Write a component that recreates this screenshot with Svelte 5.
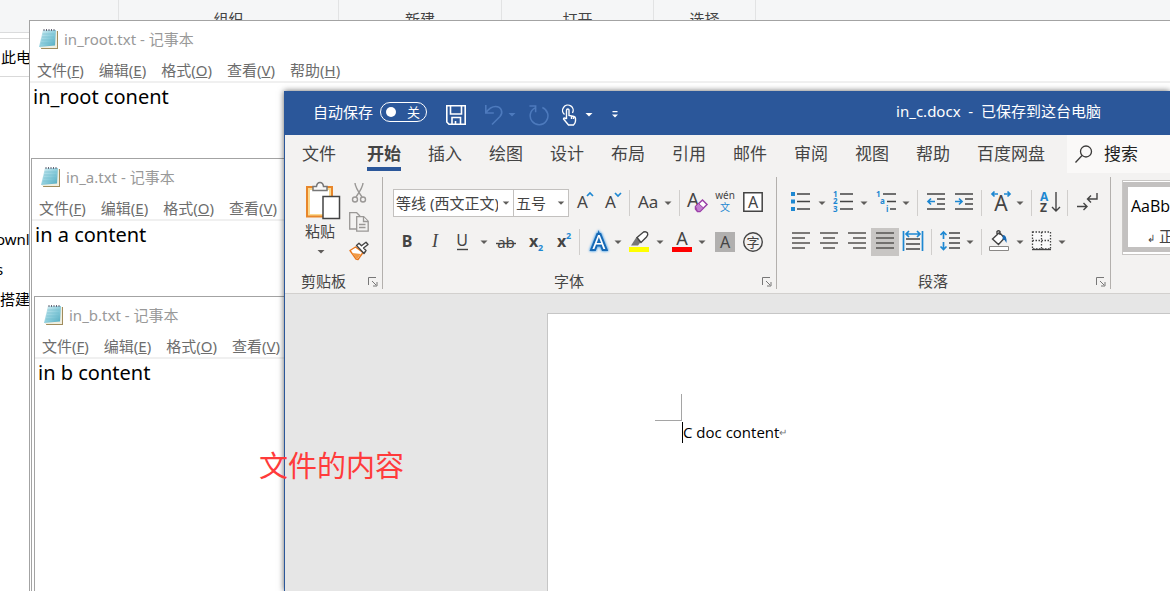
<script>
  const groups = [
    { name: '', width: 118 },
    { name: '组织', width: 219 },
    { name: '新建', width: 162 },
    { name: '打开', width: 151 },
    { name: '选择', width: 101 }
  ];
  const menus = [
    ['文件', 'F'],
    ['编辑', 'E'],
    ['格式', 'O'],
    ['查看', 'V'],
    ['帮助', 'H']
  ];
  const notepads = [
    { id: 'root', title: 'in_root.txt - 记事本', text: 'in_root conent' },
    { id: 'a', title: 'in_a.txt - 记事本', text: 'in a content' },
    { id: 'b', title: 'in_b.txt - 记事本', text: 'in b content' }
  ];
  const tabs = ['文件', '开始', '插入', '绘图', '设计', '布局', '引用', '邮件', '审阅', '视图', '帮助', '百度网盘'];
</script>

{#snippet arrow()}
  <svg class="arrow" viewBox="0 0 14 28" aria-hidden="true"><path d="M3.500 12.500h7l-3.500 3.500z" fill="#5f5d5b" /></svg>
{/snippet}

{#snippet launcher(label)}
  <button class="launcher" aria-label={label}>
    <svg width="10" height="10" viewBox="0 0 10 10" fill="none" stroke="#777">
      <path d="M.5 8V.5H8M4 4l4 4M9 5v4H5" />
    </svg>
  </button>
{/snippet}

{#snippet lines(rows)}
  <svg viewBox="0 0 28 28" stroke="#5d5b59" stroke-width="1.6">
    {#each rows as [x1, x2], i}
      <path d="M{x1} {5 + i * 5}H{x2}" />
    {/each}
  </svg>
{/snippet}

<div class="desktop">
  <section class="explorer" aria-label="文件资源管理器">
    <div class="groups">
      {#each groups as g}
        <div class="exgroup" style="width: {g.width}px">{g.name}</div>
      {/each}
    </div>
    <div class="address">此电脑</div>
    <ul class="tree">
      <li class="tail">ownload</li>
      <li class="tail">s</li>
      <li>搭建</li>
    </ul>
  </section>

  {#each notepads as n}
    <section class="notepad {n.id}">
      <header>
        <svg width="20" height="22" viewBox="0 0 20 22" aria-hidden="true">
          <defs>
            <linearGradient id="np-{n.id}" x1="0" y1="0" x2="1" y2="1">
              <stop offset="0" stop-color="#d8f0f5" />
              <stop offset=".55" stop-color="#8accdb" />
              <stop offset="1" stop-color="#4fa9bf" />
            </linearGradient>
          </defs>
          <path d="M5 3h14v18H2z" fill="#a08c5c" />
          <path d="M4 3h14v17H1z" fill="#f1efe0" />
          <path d="M4 2h13l-1 15.500L0 19z" fill="url(#np-{n.id})" />
          <path d="M3.500 6h12M3 9h12M2.500 12h12M2 15h12" stroke="#6fbccd" stroke-width=".6" />
          <path d="M5 3V1M7.500 3V1M10 3V1M12.500 3V1M15 3V1" stroke="#667" />
        </svg>
        <span>{n.title}</span>
      </header>
      <nav>
        {#each menus as [label, key]}
          <button>{label}(<u>{key}</u>)</button>
        {/each}
      </nav>
      <textarea aria-label={n.title} spellcheck="false" value={n.text}></textarea>
    </section>
  {/each}

  <section class="word">
    <header class="titlebar">
      <label class="autosave">
        自动保存
        <span class="pill"><input type="checkbox" /><i></i><b>关</b></span>
      </label>
      <div class="quick">
        <button class="save" aria-label="保存">
          <svg width="20" height="20" viewBox="0 0 20 20" fill="none" stroke="#fff" stroke-width="1.600">
            <path d="M.8.800h18.400v18.400H3L.8 17zM4.500 1v8h11V1M6 19v-6.500h8.500V19M9.500 19v-3" />
          </svg>
        </button>
        <button class="split" aria-label="撤消">
          <svg width="20" height="22" viewBox="0 0 20 22" fill="none" stroke="#4d7abd" stroke-width="1.600">
            <path d="M1.800 1v8h8M2 8.500C5 4.500 8 2.500 11.500 2.500c6 0 8 6 4.500 10L8 20.500" />
          </svg>
          <svg width="8" height="4" viewBox="0 0 8 4"><path d="M.5 0h7L4 3.500z" fill="#4d7abd" /></svg>
        </button>
        <button aria-label="重复">
          <svg width="21" height="22" viewBox="0 0 22 22" fill="none" stroke="#4d7abd" stroke-width="1.600">
            <path d="M1.500 1.500H8V8M7.500 3.500A9.300 9.300 0 1 0 15 3.200" />
          </svg>
        </button>
        <button class="split" aria-label="触摸/鼠标模式">
          <svg width="20" height="22" viewBox="0 0 20 22" fill="none" stroke="#fff" stroke-width="1.400">
            <path d="M3.500 10.500A5.300 5.300 0 1 1 11.500 9M5.500 15V6.500q0-1.500 1.300-1.500T8 6.500v5l5 1q1.500.500 1.500 2V17q0 2-2 4H7.500L2.500 15q0-2 3 0M10.500 12v3M12.500 12.500V15" />
          </svg>
          <svg width="8" height="4" viewBox="0 0 8 4"><path d="M.5 0h7L4 3.500z" fill="#fff" /></svg>
        </button>
        <button class="customize" aria-label="自定义快速访问工具栏">
          <svg width="8" height="8" viewBox="0 0 8 8" fill="#fff"><path d="M1.500 0h5v1.200h-5zM1 3.500h6L4 6.500z" /></svg>
        </button>
      </div>
      <h1>in_c.docx&nbsp; -&nbsp; 已保存到这台电脑</h1>
    </header>

    <nav class="tabs">
      {#each tabs as t}
        <button class:active={t === '开始'}>{t}</button>
      {/each}
      <button class="search">
        <svg width="18" height="18" viewBox="0 0 18 18" fill="none" stroke="#3b3a39" stroke-width="1.300">
          <circle cx="11" cy="6.500" r="5.500" /><path d="M7 10.500L.5 17.500" />
        </svg>
        搜索
      </button>
    </nav>

    <div class="ribbon">
      <div class="group clipboard">
        <div class="body">
          <button class="paste">
            <svg width="36" height="40" viewBox="0 0 36 40" fill="none">
              <path d="M2 6h25v29.500H2z" fill="#fbd98f" stroke="#e8862a" stroke-width="2" />
              <path d="M5 9h19v24H5z" fill="#fff" />
              <path d="M8 9.500V5.500h3.500q.5-4 3.500-4t3.500 4H22v4z" fill="#f8f8f8" stroke="#777" stroke-width="1.500" />
              <path d="M18 15.500h16.500v22H18z" fill="#fff" stroke="#444" stroke-width="1.500" />
            </svg>
            <span>粘贴</span>
            <svg class="more" width="8" height="4" viewBox="0 0 8 4"><path d="M.5 0h7L4 3.500z" fill="#5f5d5b" /></svg>
          </button>
          <div class="minis">
            <button aria-label="剪切">
              <svg width="20" height="20" viewBox="0 0 20 20" fill="none" stroke="#9a9896" stroke-width="1.400">
                <path d="M6 0q0 4 7 14M14 0q0 4-7 14" />
                <circle cx="6" cy="16.500" r="2.500" /><circle cx="14" cy="16.500" r="2.500" />
              </svg>
            </button>
            <button aria-label="复制">
              <svg width="20" height="20" viewBox="0 0 20 20" fill="#f3f2f1" stroke="#9a9896" stroke-width="1.300">
                <path d="M.7.700h7l3 3V17H.7z" />
                <path d="M7.700 4.700h7l4.500 4.500v10H7.700z" /><path d="M14.500 5v4.500H19M10 12.500h6.500M10 15.500h6.500" />
              </svg>
            </button>
            <button aria-label="格式刷">
              <svg width="20" height="20" viewBox="0 0 20 20" fill="none" stroke-linejoin="round">
                <path d="M6.500 6L1 9.500l6 8.500 2 .500 5-7z" fill="#fff" stroke="#e8761c" stroke-width="1.400" />
                <path d="M3 12l9 1-4 5z" fill="#f29a45" />
                <path d="M7.500 4.500l7.500 8 2-3-2.500-2.500L19 3.500 17 1.200l-4.500 3.500-2.500-2.500z" fill="#fff" stroke="#444" stroke-width="1.400" />
              </svg>
            </button>
          </div>
        </div>
        <footer><span>剪贴板</span>{@render launcher('剪贴板选项')}</footer>
      </div>

      <div class="group font">
        <div class="row">
          <div class="combo name">
            <select aria-label="字体"><option>等线 (西文正文)</option></select>{@render arrow()}
          </div>
          <div class="combo size">
            <select aria-label="字号"><option>五号</option></select>{@render arrow()}
          </div>
          <button aria-label="增大字号">
            <svg viewBox="0 0 28 28"><text x="8" y="19" font-size="17">A</text><path d="M18 7l3-3 3 3" class="blue" /></svg>
          </button>
          <button aria-label="减小字号">
            <svg viewBox="0 0 28 28"><text x="8" y="19" font-size="17">A</text><path d="M18 4l3 3 3-3" class="blue" /></svg>
          </button>
          <hr />
          <button aria-label="更改大小写">
            <svg viewBox="0 0 28 28"><text x="5" y="19" font-size="17">Aa</text></svg>{@render arrow()}
          </button>
          <hr />
          <button aria-label="清除所有格式">
            <svg viewBox="0 0 28 28">
              <text x="4" y="18" font-size="19">A</text>
              <path d="M12.500 17.500l7-6.500 4.500 4.500-7 7h-2.500l-2-2.500z" fill="#fff" stroke="#9b3fa8" stroke-width="1.500" />
              <path d="M12.500 17.500l3-3 5 4.500-3.500 3.500h-2.500z" fill="#c27fd0" stroke="#9b3fa8" />
            </svg>
          </button>
          <button aria-label="拼音指南">
            <svg viewBox="0 0 28 28"><text x="14" y="10" font-size="10" text-anchor="middle">wén</text><text x="14" y="22" font-size="10" text-anchor="middle" class="bluetext">文</text></svg>
          </button>
          <button aria-label="字符边框">
            <svg viewBox="0 0 28 28"><path d="M4.800 3.800h18.400v18.400H4.800z" fill="#fff" stroke="#444" stroke-width="1.500" /><text x="14" y="19" font-size="16" text-anchor="middle">A</text></svg>
          </button>
        </div>
        <div class="row">
          <button aria-label="加粗"><svg viewBox="0 0 28 28"><text x="14" y="19" font-size="16" font-weight="700" text-anchor="middle">B</text></svg></button>
          <button aria-label="倾斜"><svg viewBox="0 0 28 28"><text x="14" y="19" font-size="18" class="serif" text-anchor="middle">I</text></svg></button>
          <button aria-label="下划线">
            <svg viewBox="0 0 28 28"><text x="13" y="18" font-size="16" text-anchor="middle">U</text><path d="M8 21.500h11" class="ink" /></svg>{@render arrow()}
          </button>
          <button aria-label="删除线"><svg viewBox="0 0 28 28"><text x="15" y="20" font-size="15" text-anchor="middle">ab</text><path d="M5 15.500h20" class="ink" /></svg></button>
          <button aria-label="下标"><svg viewBox="0 0 28 28"><text x="10" y="19" font-size="16" font-weight="700">x</text><text x="19" y="23" font-size="9" font-weight="700" class="bluetext">2</text></svg></button>
          <button aria-label="上标"><svg viewBox="0 0 28 28"><text x="10" y="19" font-size="16" font-weight="700">x</text><text x="19" y="11" font-size="9" font-weight="700" class="bluetext">2</text></svg></button>
          <hr />
          <button aria-label="文本效果和版式">
            <svg class="effect" viewBox="0 0 28 28"><text x="16" y="21" font-size="20" text-anchor="middle">A</text></svg>{@render arrow()}
          </button>
          <button aria-label="文本突出显示颜色">
            <svg viewBox="0 0 28 28">
              <path d="M4 19h20v5H4z" fill="#ff0" />
              <path d="M6 17.500L11.500 9l4.500 4.500-3 4z" fill="#777" />
              <path d="M12 9.500L18.500 4Q21 3 22.500 5q1 2-1 4L16 14.500z" fill="#fff" stroke="#444" stroke-width="1.400" />
            </svg>{@render arrow()}
          </button>
          <button aria-label="字体颜色">
            <svg viewBox="0 0 28 28"><text x="15" y="17" font-size="18" text-anchor="middle">A</text><path d="M5 19h20v5H5z" fill="red" /></svg>{@render arrow()}
          </button>
          <button aria-label="字符底纹"><svg viewBox="0 0 28 28"><path d="M6 4h20v20H6z" fill="#b1b0af" /><text x="16" y="20" font-size="16" text-anchor="middle">A</text></svg></button>
          <button aria-label="带圈字符"><svg viewBox="0 0 28 28"><circle cx="16" cy="14" r="9.300" fill="none" class="ink" /><text x="16" y="19" font-size="13" text-anchor="middle">字</text></svg></button>
        </div>
        <footer><span>字体</span>{@render launcher('字体选项')}</footer>
      </div>

      <div class="group para">
        <div class="row">
          <button aria-label="项目符号">
            <svg viewBox="0 0 28 28"><path d="M4 3h4v4H4zM4 10.500h4v4H4zM4 18h4v4H4z" fill="#1e88d2" /><path d="M10 5h13M10 12.500h13M10 20h13" class="ink" /></svg>{@render arrow()}
          </button>
          <button aria-label="编号">
            <svg viewBox="0 0 28 28">
              <g font-size="8" font-weight="700" class="bluetext"><text x="4" y="8">1</text><text x="4" y="15">2</text><text x="4" y="23">3</text></g>
              <path d="M11 5h13M11 12.500h13M11 20h13" class="ink" />
            </svg>{@render arrow()}
          </button>
          <button aria-label="多级列表">
            <svg viewBox="0 0 28 28">
              <g font-size="8" font-weight="700" class="bluetext"><text x="5" y="8">1</text><text x="9" y="15">a</text><text x="15" y="23">i</text></g>
              <path d="M12 5h13M16 12.500h9M19 20h6" class="ink" />
            </svg>{@render arrow()}
          </button>
          <hr />
          <button aria-label="减少缩进量">
            <svg viewBox="0 0 28 28"><path d="M6 5h18M16 10h8M16 15h8M6 20h18" class="ink" /><path d="M14 12.500H7M10 9.500l-3 3 3 3" class="blue" /></svg>
          </button>
          <button aria-label="增加缩进量">
            <svg viewBox="0 0 28 28"><path d="M6 5h18M16 10h8M16 15h8M6 20h18" class="ink" /><path d="M6 12.500h7M10 9.500l3 3-3 3" class="blue" /></svg>
          </button>
          <hr />
          <button aria-label="中文版式">
            <svg viewBox="0 0 28 28"><text x="16" y="22" font-size="21" text-anchor="middle">A</text><path d="M7 5h6M9.500 2.500L7 5l2.500 2.500M19 5h6M22.500 2.500L25 5 22.500 7.500" class="blue" /></svg>{@render arrow()}
          </button>
          <hr />
          <button aria-label="排序">
            <svg viewBox="0 0 28 28"><text x="5" y="12" font-size="12" font-weight="700" class="bluetext">A</text><text x="5" y="23" font-size="12" font-weight="700">Z</text><path d="M21 3v19M17 18l4 4 4-4" class="ink" fill="none" /></svg>
          </button>
          <hr />
          <button aria-label="显示编辑标记">
            <svg viewBox="0 0 28 28" fill="none"><path d="M6 17.500h10M12.500 14l3.500 3.500-3.500 3.500M26 4v6h-9M20 6.500L16.500 10l3.500 3.500" class="ink" /></svg>
          </button>
        </div>
        <div class="row">
          <button aria-label="左对齐">{@render lines([[5, 23], [5, 18], [5, 23], [5, 18]])}</button>
          <button aria-label="居中">{@render lines([[5, 23], [8, 20], [5, 23], [8, 20]])}</button>
          <button aria-label="右对齐">{@render lines([[5, 23], [10, 23], [5, 23], [10, 23]])}</button>
          <button class="on" aria-label="两端对齐">{@render lines([[5, 23], [5, 23], [5, 23], [5, 23]])}</button>
          <button aria-label="分散对齐">
            <svg viewBox="0 0 28 28"><path d="M7 11h14M7 16h14M7 21h14" class="ink" /><path d="M4.500 3v20M23.500 3v20M7 6h14M10 3L7 6l3 3M18 3l3 3-3 3" class="blue" /></svg>
          </button>
          <hr />
          <button aria-label="行和段落间距">
            <svg viewBox="0 0 28 28"><path d="M14 5h11M14 10h11M14 15h11M14 20h11" class="ink" /><path d="M8.500 4v7M5.500 7l3-3 3 3M8.500 14v8M5.500 18.500l3 3 3-3" class="blue" /></svg>{@render arrow()}
          </button>
          <hr />
          <button aria-label="底纹">
            <svg viewBox="0 0 28 28">
              <path d="M4.500 18.500h19v4h-19z" fill="#fff" stroke="#8a8886" />
              <path d="M7.500 11l7-6.500 5 5.500-6 6.500zM12 7V3.500q1.500-1.500 3 0V7" fill="#fff" class="ink" />
              <path d="M18 7q4 0 3.500 8-1.500-3.500-4-4z" fill="#1769b5" />
            </svg>{@render arrow()}
          </button>
          <button aria-label="边框">
            <svg viewBox="0 0 28 28"><path d="M5.500 4h18v17h-18zM14.500 4v17M5.500 12.500h18" fill="#fafafa" stroke="#444" stroke-width="1.300" stroke-dasharray="1.500 1.500" /><path d="M5 21.500h19" class="ink" /></svg>{@render arrow()}
          </button>
        </div>
        <footer><span>段落</span>{@render launcher('段落选项')}</footer>
      </div>

      <div class="styles">
        <button><span class="sample">AaBbCcDd</span><span class="stylename"><small>↲</small> 正文</span></button>
      </div>
    </div>

    <main>
      <article>
        <div class="corner"></div>
        <p>C doc content<small>↵</small></p>
      </article>
    </main>
  </section>

  <p class="note">文件的内容</p>
</div>

<style>
  :global(body) { margin: 0; }
  .desktop, .desktop * { box-sizing: border-box; }
  .desktop {
    position: relative;
    height: 100vh;
    overflow: hidden;
    background: #fff;
    font: 15px/20px "Noto Sans", "Noto Sans CJK SC", sans-serif;
    color: #000;
  }
  button { display: flex; align-items: center; padding: 0; border: 0; background: none; color: inherit; font: inherit; white-space: nowrap; }
  svg { display: block; flex: none; }

  .groups { display: flex; height: 33px; background: #f5f6f7; border-bottom: 1px solid #dadbdc; }
  .exgroup { box-sizing: content-box; flex: none; padding-top: 9px; border-right: 1px solid #e2e3e4; text-align: center; color: #444; }
  .address { height: 39px; margin-top: 5px; padding-left: 1px; border: solid #d9d9d9; border-width: 1px 0; line-height: 37px; }
  .tree { margin: 147px 0 0; padding: 0; list-style: none; line-height: 30px; }
  .tree .tail { margin-left: -4px; }

  .notepad { position: absolute; right: 0; bottom: 0; display: flex; flex-direction: column; border: solid #a3a3a3; border-width: 1px 0 0 1px; background: #fff; }
  .root { left: 29px; top: 20px; }
  .a { left: 31px; top: 158px; }
  .b { left: 34px; top: 296px; }
  .notepad header { display: flex; align-items: center; gap: 5px; height: 38px; padding: 0 0 2px 9px; color: #999; }
  .notepad nav { display: flex; gap: 15px; height: 24px; padding-left: 7px; border-bottom: 2px solid #f0f0f0; color: #6d6d6d; }
  textarea { flex: 1; padding: 0 3px; border: 0; outline: 0; resize: none; background: none; color: #000; font: 20px/28px "Noto Sans", "Noto Sans CJK SC", sans-serif; }

  .word { position: absolute; left: 284px; right: 0; top: 91px; bottom: 0; display: flex; flex-direction: column; border-left: 1px solid #2b579a; background: #f3f2f1; color: #444; box-shadow: 0 0 6px rgba(0, 0, 0, .6); }
  .titlebar { display: flex; align-items: center; height: 44px; padding: 0 69px 0 28px; background: #2b579a; color: #fff; }
  .autosave { display: flex; align-items: center; gap: 7px; margin-bottom: 3px; }
  .pill { position: relative; display: flex; align-items: center; justify-content: space-between; width: 47px; height: 20px; padding: 0 6px 0 5px; border: 1px solid #fff; border-radius: 10px; }
  .pill input { position: absolute; inset: 0; margin: 0; opacity: 0; }
  .pill i { width: 10px; height: 10px; border-radius: 5px; background: #fff; }
  .pill b { font-size: 13px; font-weight: 400; line-height: 18px; }
  .quick { display: flex; align-items: center; gap: 12px; margin: 3px 0 0 19px; }
  .save { margin-right: 6px; }
  .customize { margin-left: 6px; }
  .split { gap: 4px; }
  h1 { margin: 0 0 4px auto; font-size: 15px; font-weight: 400; white-space: nowrap; }

  .tabs { display: flex; gap: 27px; height: 39px; padding-left: 17px; font-size: 17px; }
  .tabs button { position: relative; flex: none; height: 37px; }
  .tabs button:first-child { margin-right: 4px; }
  .tabs .active { font-weight: 700; }
  .tabs .active::after { content: ""; position: absolute; left: 0; right: 0; bottom: 1px; height: 4px; background: #2b579a; }
  .tabs .search { flex: 1; gap: 11px; height: 38px; margin-left: -5px; padding-left: 8px; background: #faf9f8; color: #222; }

  .ribbon { display: flex; height: 120px; padding-top: 3px; border-bottom: 1px solid #d2d0ce; }
  .group { display: flex; flex-direction: column; flex: none; height: 112px; border-right: 1px solid #b3b0ad; }
  .clipboard { width: 98px; }
  .font { width: 394px; padding-left: 10px; }
  .para { width: 334px; padding-left: 10px; }
  .body { display: flex; gap: 8px; height: 94px; padding: 4px 0 0 20px; }
  .paste { flex-direction: column; align-items: flex-start; width: 36px; }
  .paste span { margin-bottom: 9px; }
  .more { margin-left: 12px; }
  .minis { display: flex; flex-direction: column; gap: 9px; padding-top: 2px; }
  .row { display: flex; height: 28px; margin-top: 12px; }
  .row + .row { margin-top: 11px; }
  .row button { flex: none; height: 28px; }
  .row svg { width: 28px; height: 28px; }
  .row .arrow { width: 14px; }
  .row .on { background: #c8c6c4; }
  hr { width: 1px; height: 26px; margin: 1px 3px 0 4px; border: 0; background: #d0cecc; }
  .combo { position: relative; border: 1px solid #c3c1bf; background: #fff; }
  .combo.size { border-left: 0; }
  .name { width: 121px; }
  .size { width: 55px; }
  select { width: 100%; height: 26px; padding: 0 15px 0 2px; border: 0; appearance: none; background: none; color: #444; font: 15px/26px "Noto Sans", "Noto Sans CJK SC", sans-serif; }
  .combo .arrow { position: absolute; right: 0; top: 0; height: 26px; pointer-events: none; }
  footer { display: flex; align-items: center; height: 16px; margin-top: auto; padding-right: 4px; }
  footer span { flex: 1; padding-right: 17px; text-align: center; }
  .clipboard footer span { padding-right: 6px; }
  .launcher { margin-top: 2px; }

  .row text { fill: #444; font-family: "Noto Sans", "Noto Sans CJK SC", sans-serif; }
  .row .serif { font-family: "Liberation Serif", serif; font-style: italic; }
  .row .bluetext, .row .bluetext text { fill: #1e88d2; }
  .effect { filter: drop-shadow(0 0 1px #4ba3e6) drop-shadow(0 0 1px #8fc3ee); }
  .row .effect text { fill: #fff; stroke: #1769b5; stroke-width: 4; paint-order: stroke; }
  .blue { fill: none; stroke: #1e88d2; stroke-width: 1.7; }
  .ink { stroke: #444; stroke-width: 1.4; }

  .styles { flex: 1; height: 75px; margin: 3px 0 0 11px; padding: 1px 0 4px; overflow: hidden; border: 1px solid #c8c6c4; border-right: 0; background: #fff; }
  .styles button { flex-direction: column; align-items: flex-start; gap: 10px; width: 90px; height: 70px; padding: 9px 3px; border: 5px solid #c3c1c0; }
  .sample { color: #000; font: 16px/20px "Open Sans", sans-serif; }
  .stylename { padding-left: 16px; }
  small { font-size: 10px; }

  main { flex: 1; padding: 19px 0 0 262px; background: #e6e6e6; }
  article { height: 100%; padding: 80px 0 0 107px; border: solid #c6c6c6; border-width: 1px 0 0 1px; background: #fff; color: #000; }
  .corner { width: 27px; height: 27px; border: solid #a5a5a5; border-width: 0 1px 1px 0; }
  article p { display: flex; align-items: center; width: max-content; height: 21px; margin: 1px 0 0 27px; border-left: 1px solid #000; font: 15px/21px "Open Sans", sans-serif; }
  article small { color: #777; }
  .note { position: absolute; left: 259px; top: 446px; margin: 0; color: #ff3b3b; font-size: 29px; line-height: 40px; }
</style>
